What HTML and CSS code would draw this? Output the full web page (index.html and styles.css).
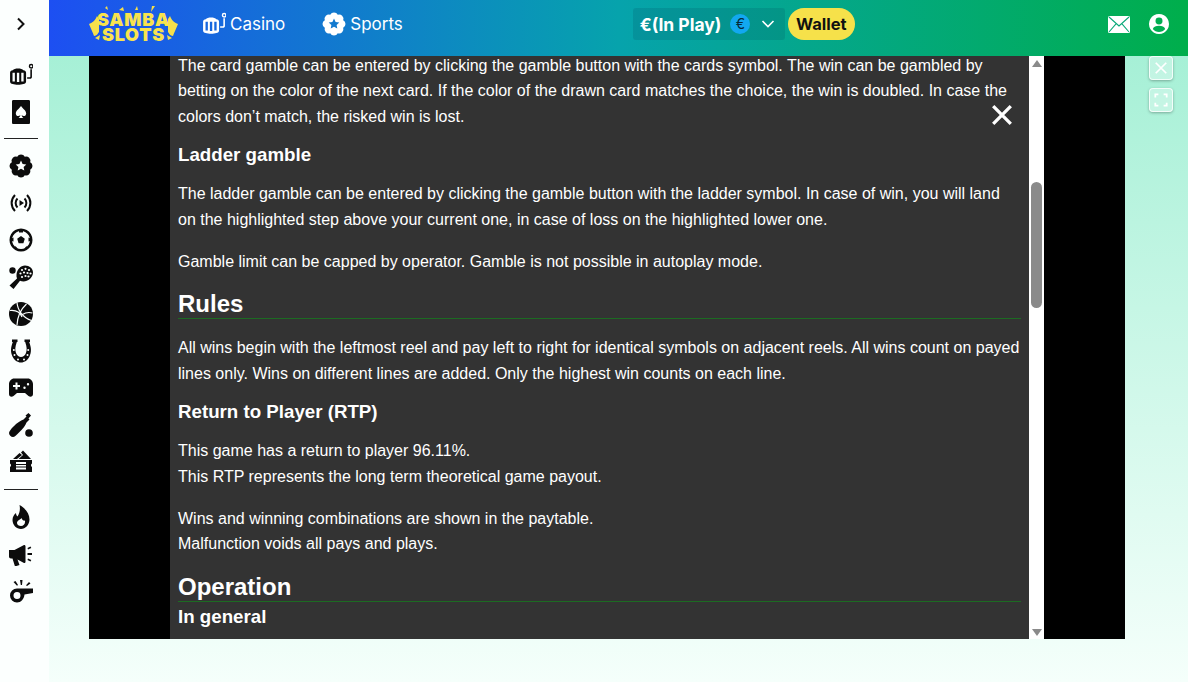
FILE: index.html
```html
<!DOCTYPE html>
<html lang="en">

<head>
  <meta charset="UTF-8">
  <meta name="viewport" content="width=device-width, initial-scale=1.0">
  <title>Samba Slots</title>
  <link rel="stylesheet" href="styles.css">
</head>

<body>
  <svg class="icon-defs" width="0" height="0">
    <symbol id="i-slot" viewBox="0 1.500 22.500 21">
      <path fill-rule="evenodd" d="M3.500 7.500C5 5.500 12 5.500 13.500 7.500C15 7.700 16 8.500 16 10V18C16 19.500 15 20 13.500 20.500C11 21.500 6 21.500 3.500 20.500C2 20 1 19.500 1 18V10C1 8.500 2 7.700 3.500 7.500ZM3.300 10V18H5.500V10ZM7.400 10V18.500H9.600V10ZM11.500 10V18H13.700V10Z"/>
      <path d="M17 15.500H19.800C20.800 15.500 21.500 14.800 21.500 13.800V6.500H20V13.500C20 13.900 19.900 14 19.500 14H17Z"/>
      <path fill-rule="evenodd" d="M20.800 1.500A2.300 2.300 0 1 1 20.790 6.100A2.300 2.300 0 1 1 20.800 1.500ZM20.800 2.800A1 1 0 1 0 20.810 4.800A1 1 0 1 0 20.800 2.800Z"/>
    </symbol>
    <symbol id="i-star" viewBox="0 0 24 24">
      <path fill-rule="evenodd" d="M21.200 8.200A4.300 4.300 0 0 1 21.200 15.800A4.300 4.300 0 0 1 15.800 21.200A4.300 4.300 0 0 1 8.200 21.200A4.300 4.300 0 0 1 2.800 15.800A4.300 4.300 0 0 1 2.800 8.200A4.300 4.300 0 0 1 8.200 2.800A4.300 4.300 0 0 1 15.800 2.800A4.300 4.300 0 0 1 21.200 8.200ZM12 6.500L10.400 10L6.700 10.400L9.400 13L8.700 16.600L12 14.800L15.300 16.600L14.600 13L17.300 10.400L13.600 10Z"/>
    </symbol>
  </svg>

  <aside class="sidebar">
    <div class="side-toggle">
      <svg class="chevron" viewBox="0 0 10 14"><path d="M2 1.500L7.500 7L2 12.500"/></svg>
    </div>
    <nav class="side-group">
      <span class="side-icon"><svg viewBox="0 0 24 24"><use href="#i-slot"/></svg></span>
      <span class="side-icon">
        <svg viewBox="0 0 24 24"><path fill-rule="evenodd" d="M4.500 0H19.500C20.500 0 21 .5 21 1.500V22.500C21 23.500 20.500 24 19.500 24H4.500C3.500 24 3 23.500 3 22.500V1.500C3 .5 3.500 0 4.500 0ZM12 6C10 9 6.800 10.500 6.800 13.500C6.800 16.200 10 17 11.300 15C11.200 16.300 10.500 17.300 9.500 18H14.500C13.500 17.300 12.800 16.300 12.700 15C14 17 17.200 16.200 17.200 13.500C17.200 10.500 14 9 12 6Z"/></svg>
      </span>
    </nav>
    <hr class="side-line">
    <nav class="side-group">
      <span class="side-icon"><svg viewBox="0 0 24 24"><use href="#i-star"/></svg></span>
      <span class="side-icon">
        <svg viewBox="0 0 24 24" class="live"><path d="M6 4C1.500 8.500 1.500 15.500 6 20M18 4C22.500 8.500 22.500 15.500 18 20M8.500 7.500C6 10 6 14 8.500 16.500M15.500 7.500C18 10 18 14 15.500 16.500"/><path class="solid" d="M10.500 9L15 12L10.500 15Z"/></svg>
      </span>
      <span class="side-icon">
        <svg viewBox="0 0 24 24"><path fill-rule="evenodd" d="M12 .5A11.500 11.500 0 1 1 11.990 .5ZM12 3A9 9 0 1 0 12.010 3ZM12 8L15.800 10.700L14.400 15.200H9.600L8.200 10.700Z"/><path d="M10 2.500H14V4.500H10ZM2.500 10.500L4.500 9.500V13.500L2.500 13ZM21.500 10.500L19.500 9.500V13.500L21.500 13ZM6 18L8 19.500L6.500 20.500ZM18 18L16 19.500L17.500 20.500Z"/></svg>
      </span>
      <span class="side-icon">
        <svg viewBox="0 0 24 24"><path fill-rule="evenodd" d="M16 .5C20.500 .5 24 3.500 24 7.500C24 12.500 19 16.500 14.500 16.500C13.200 16.500 12 16.200 11 15.700L4.500 24L.5 20.500L8 13.500C7.500 12.200 7.300 11 7.500 9.500C8 4.500 11.500 .5 16 .5Z"/><circle cx="3.500" cy="5.500" r="3.200"/><g class="knock"><circle cx="13" cy="5" r="1.100"/><circle cx="16.500" cy="3.800" r="1.100"/><circle cx="20" cy="5" r="1.100"/><circle cx="11.500" cy="8.500" r="1.100"/><circle cx="15" cy="7.500" r="1.100"/><circle cx="18.500" cy="8" r="1.100"/><circle cx="21.500" cy="8.500" r="1.100"/><circle cx="13" cy="12" r="1.100"/><circle cx="16.500" cy="11" r="1.100"/><circle cx="19.500" cy="11.500" r="1.100"/></g></svg>
      </span>
      <span class="side-icon">
        <svg viewBox="0 0 24 24"><circle cx="12" cy="12" r="12"/><path class="knock-line" d="M8 .5C8.500 8 14 16 22.500 18.500M17.500 2C12 7 8.500 14.500 8 23M1 8.500C6 8 11 10 13 15M23.500 11C20 10 16.500 10.500 13.500 12.500"/></svg>
      </span>
      <span class="side-icon">
        <svg viewBox="0 0 24 24"><path fill-rule="evenodd" d="M3 .5H8.500V3H7.800C6 8 6 11 7 14C8 16.500 10 18 12 18C14 18 16 16.500 17 14C18 11 18 8 16.200 3H15.500V.5H21V3H20.200C22.500 9 22.500 13 20.500 17.500C18.800 21.300 15.500 23.500 12 23.500C8.500 23.500 5.200 21.300 3.500 17.500C1.500 13 1.500 9 3.800 3H3Z"/><g class="knock"><circle cx="4.800" cy="11" r="1"/><circle cx="5.500" cy="16" r="1"/><circle cx="9" cy="20.500" r="1"/><circle cx="15" cy="20.500" r="1"/><circle cx="18.500" cy="16" r="1"/><circle cx="19.200" cy="11" r="1"/></g></svg>
      </span>
      <span class="side-icon">
        <svg viewBox="0 0 24 24"><path fill-rule="evenodd" d="M5 2.500H19C21.500 2.500 24 5 24 8V18C24 20.500 21.500 21.500 19.500 20L16 17H8L4.500 20C2.500 21.500 0 20.500 0 18V8C0 5 2.500 2.500 5 2.500ZM6.500 6.500V9H4V11H6.500V13.500H8.500V11H11V9H8.500V6.500ZM15.500 10.500A1.200 1.200 0 1 0 15.510 12.900A1.200 1.200 0 1 0 15.500 10.500ZM19 7A1.200 1.200 0 1 0 19.010 9.400A1.200 1.200 0 1 0 19 7Z"/></svg>
      </span>
      <span class="side-icon">
        <svg viewBox="0 0 24 24"><path d="M19.500 0L22 2.500L19.500 5.500L20.500 6.500L17.500 9.500C16.500 12.500 14 15.500 10 19.500C7.500 22 5.500 24 4 24C2 24 0 22 0 20C0 18.500 2 16 4.500 13.500C8.500 9.500 11.500 7.500 14.500 6.500L17.500 3.500L16.500 2.500Z"/><circle cx="20" cy="20" r="3.800"/></svg>
      </span>
      <span class="side-icon">
        <svg viewBox="0 0 24 24"><path fill-rule="evenodd" d="M1 10H23V13.500A2 2 0 0 0 23 17V22H1V17A2 2 0 0 0 1 13.500ZM7 12V14H17V12ZM7 15V16.500H17V15ZM7 17.500V19.500H17V17.500Z"/><path d="M4 9L10.500 3L13 5L8 9ZM9.500 9L14 5L12 2.500L14 .5L22 9Z"/></svg>
      </span>
    </nav>
    <hr class="side-line">
    <nav class="side-group">
      <span class="side-icon">
        <svg viewBox="0 0 24 24"><path fill-rule="evenodd" d="M10.500 0C16.500 3.500 20.500 8.500 20.500 14.500C20.500 19.500 16.500 24 12 24C7.500 24 3.500 20 3.500 15C3.500 12 5 9.500 7 8C7 9.500 7.500 10.700 8.500 11.500C10.500 8.500 11.500 4.500 10.500 0ZM12.500 13C11 15 8 15.500 8 18C8 19.800 10 21 12 21C14.500 21 16.500 19 16 15.500C14.800 16 13 15 12.500 13Z"/></svg>
      </span>
      <span class="side-icon">
        <svg viewBox="0 0 24 24"><path d="M0 8H5.500L15 3C16 3 16.500 3.500 16.500 4.500V19.500C16.500 20.500 16 21 15 21L8.500 17.500L10.500 23L6 24.500L3.500 16.500H2C.8 16.500 0 15.700 0 14.500Z"/><path d="M18.500 6L21.500 4.500L22.300 6L19 7.500ZM18.500 11H23V13H18.500ZM19 16.500L22.300 18L21.500 19.500L18.500 18Z"/></svg>
      </span>
      <span class="side-icon">
        <svg viewBox="0 0 24 24"><path fill-rule="evenodd" d="M8 9.500H24V14L15.500 15.500C15 20 12 23.500 8 23.500A7 7 0 1 1 8 9.500ZM8 13A3.500 3.500 0 1 0 8.010 20A3.500 3.500 0 1 0 8 13Z"/><path d="M11 1H13.500L13 6H11.800ZM4.500 3L6.500 2L9 6L8 6.800ZM20 3L21.500 4.500L18 7L17 6.200Z"/></svg>
      </span>
    </nav>
  </aside>

  <div class="page">
    <header class="topbar">
      <a class="logo">
        <svg class="logo-bits" viewBox="0 0 89 39">
          <path d="M0 19C3 18 6 16 8 11L10 14L10 27C9 28 8 31 5 31C4 28 2 24 0 19ZM89 19C86 18 83 16 81 11L79 14L79 27C80 28 81 31 84 31C85 28 87 24 89 19ZM6 33L11 30L10 35ZM83 33L78 30L79 35ZM16 3L18 1L19 5ZM30 5L34 2L35 6ZM46 5L48 1L49 5ZM62 7L63 1L66 1Z"/>
        </svg>
        <span class="logo-text">SAMBA<br>SLOTS</span>
      </a>
      <a class="top-link">
        <svg class="top-icon" viewBox="0 0 24 24"><use href="#i-slot"/></svg>
        Casino
      </a>
      <a class="top-link">
        <svg class="top-icon" viewBox="0 0 24 24"><use href="#i-star"/></svg>
        Sports
      </a>
      <div class="balance">
        <div class="balance-box">
          <span class="balance-text">€(In Play)</span>
          <span class="coin">€</span>
          <svg class="balance-caret" viewBox="0 0 14 8"><path d="M1.500 1L7 6.500L12.500 1"/></svg>
        </div>
        <button class="wallet">Wallet</button>
      </div>
      <div class="top-right">
        <svg class="mail" viewBox="0 0 22 17">
          <rect width="22" height="17" rx="1.500"/>
          <path d="M1 1L11 10L21 1M1 16L8.200 7.700M21 16L13.800 7.700"/>
        </svg>
        <svg class="user" viewBox="0 0 20 20"><path fill-rule="evenodd" d="M10 0A10 10 0 1 1 9.990 0ZM10 3.500A3.500 3.500 0 1 0 10.010 10.500A3.500 3.500 0 1 0 10 3.500ZM10 11.800C7 11.800 4.500 13 3.800 15C5.300 16.800 7.500 18 10 18C12.500 18 14.700 16.800 16.200 15C15.500 13 13 11.800 10 11.800Z"/></svg>
      </div>
    </header>

    <main class="stage">
      <div class="game">
        <div class="help-panel">
          <div class="help-text">
            <p>The card gamble can be entered by clicking the gamble button with the cards symbol. The win can be gambled by betting on the color of the next card. If the color of the drawn card matches the choice, the win is doubled. In case the colors don’t match, the risked win is lost.</p>
            <h3>Ladder gamble</h3>
            <p>The ladder gamble can be entered by clicking the gamble button with the ladder symbol. In case of win, you will land on the highlighted step above your current one, in case of loss on the highlighted lower one.</p>
            <p>Gamble limit can be capped by operator. Gamble is not possible in autoplay mode.</p>
            <h2>Rules</h2>
            <p>All wins begin with the leftmost reel and pay left to right for identical symbols on adjacent reels. All wins count on payed lines only. Wins on different lines are added. Only the highest win counts on each line.</p>
            <h3>Return to Player (RTP)</h3>
            <p>This game has a return to player 96.11%.<br>This RTP represents the long term theoretical game payout.</p>
            <p>Wins and winning combinations are shown in the paytable.<br>Malfunction voids all pays and plays.</p>
            <h2>Operation</h2>
            <h3>In general</h3>
          </div>
          <svg class="help-close" viewBox="0 0 20 20"><path d="M2 2L18 18M18 2L2 18"/></svg>
        </div>
        <div class="scrollbar">
          <span class="arrow-up"></span>
          <span class="thumb"></span>
          <span class="arrow-down"></span>
        </div>
      </div>
      <div class="game-tools">
        <button class="tool-btn"><svg viewBox="0 0 16 16"><path d="M2 2L14 14M14 2L2 14"/></svg></button>
        <button class="tool-btn"><svg viewBox="0 0 16 16"><path d="M1.500 5V1.500H5M11 1.500H14.500V5M14.500 11V14.500H11M5 14.500H1.500V11"/></svg></button>
      </div>
    </main>
  </div>
</body>

</html>
```

FILE: styles.css
```css
* {
  box-sizing: border-box;
}

html,
body {
  height: 100%;
}

body {
  margin: 0;
  display: flex;
  overflow: hidden;
  font-family: "Liberation Sans", Arial, sans-serif;
  background: linear-gradient(180deg, #a6f0d6 8%, #f5fffb 100%);
}

.icon-defs {
  position: absolute;
}

/* left rail */
.sidebar {
  width: 49px;
  flex-shrink: 0;
  background-color: #fcfffe;
  color: #0c0c0c;
}

.side-toggle {
  height: 48px;
  display: flex;
  align-items: center;
  padding-left: 16px;
  margin-bottom: 8px;
}

.chevron {
  width: 10px;
  height: 14px;
  fill: none;
  stroke: #111;
  stroke-width: 2;
}

.side-group {
  display: flex;
  flex-direction: column;
}

.side-icon {
  height: 37px;
  display: flex;
  align-items: center;
  padding-left: 9px;
}

.side-icon svg {
  width: 24px;
  height: 24px;
  fill: currentColor;
}

.side-icon .live {
  fill: none;
  stroke: currentColor;
  stroke-width: 2;
}

.side-icon .live .solid {
  fill: currentColor;
  stroke: none;
}

.knock {
  fill: #fcfffe;
}

.knock-line {
  fill: none;
  stroke: #fcfffe;
  stroke-width: 1.2;
}

.side-line {
  margin: 8px 11px 8px 4px;
  border: 0;
  border-top: 1px solid #222;
}

.side-line:last-of-type {
  margin-top: 9px;
}

/* header */
.page {
  flex: 1;
  display: flex;
  flex-direction: column;
  min-width: 0;
}

.topbar {
  height: 56px;
  flex-shrink: 0;
  display: flex;
  align-items: center;
  padding: 0 0 8px 40px;
  color: #fff;
  font-family: Inter, "Liberation Sans", sans-serif;
  background: linear-gradient(90deg, #1d4ff2 0%, #06a3ac 50%, #00ae4b 100%);
  position: relative;
  z-index: 2;
}

.logo {
  width: 89px;
  height: 39px;
  margin-right: 24px;
  padding-top: 7px;
  position: relative;
  text-align: center;
}

.logo-bits {
  position: absolute;
  left: 0;
  top: 0;
  width: 89px;
  height: 39px;
  fill: #f6e04c;
}

.logo-text {
  display: block;
  position: relative;
  font-size: 18px;
  line-height: 15px;
  font-weight: 900;
  letter-spacing: .7px;
  color: #f8e34e;
}

.top-link {
  display: flex;
  align-items: center;
  gap: 4px;
  margin-right: 37px;
  font-size: 17px;
  color: #fff;
}

.top-icon {
  width: 24px;
  height: 24px;
  fill: #fff;
}

.balance {
  display: flex;
  align-items: center;
  gap: 3px;
  margin-left: 193px;
}

.balance-box {
  height: 32px;
  width: 152px;
  display: flex;
  align-items: center;
  padding-left: 7px;
  border-radius: 3px;
  background-color: rgba(0, 60, 90, .16);
}

.balance-text {
  font-size: 17.5px;
  font-weight: 700;
  white-space: nowrap;
}

.coin {
  width: 20px;
  height: 20px;
  margin-left: 9px;
  border-radius: 50%;
  background-color: #12a8f0;
  color: #062a3a;
  font-size: 14px;
  line-height: 20px;
  text-align: center;
}

.balance-caret {
  width: 14px;
  height: 8px;
  margin-left: 11px;
  fill: none;
  stroke: #fff;
  stroke-width: 1.600;
}

.wallet {
  height: 32px;
  width: 67px;
  padding: 0;
  border: none;
  border-radius: 16px;
  background-color: #f6e14a;
  color: #111;
  font-family: inherit;
  font-size: 16.5px;
  font-weight: 700;
}

.top-right {
  margin-left: auto;
  margin-right: 19px;
  display: flex;
  align-items: center;
  gap: 19px;
}

.mail {
  width: 22px;
  height: 17px;
  fill: #fff;
}

.mail path {
  fill: none;
  stroke: #08a878;
  stroke-width: 1.1;
}

.user {
  width: 20px;
  height: 20px;
  fill: #fff;
}

/* game area */
.stage {
  display: flex;
  align-items: flex-start;
  padding-left: 40px;
}

.game {
  width: 1036px;
  height: 583px;
  flex-shrink: 0;
  display: flex;
  justify-content: center;
  background-color: #000;
}

.help-panel {
  width: 859px;
  padding: 0 8px;
  position: relative;
  overflow: hidden;
  background-color: #333;
  color: #fff;
}

.help-text {
  margin-top: -3.4px;
  font-size: 16px;
  line-height: 25.6px;
}

.help-text p {
  margin: 0 0 16px;
}

.help-text h2 {
  margin: 0 0 5px;
  font-size: 24px;
  line-height: 28px;
  border-bottom: 1px solid #1c6b22;
}

.help-text h2 + p {
  margin-top: 16px;
}

.help-text h3 {
  margin: 0 0 16px;
  font-size: 18.72px;
  line-height: 20px;
}

.help-close {
  position: absolute;
  left: 821px;
  top: 48px;
  width: 22px;
  height: 22px;
  fill: none;
  stroke: #fff;
  stroke-width: 3;
}

.scrollbar {
  width: 15px;
  position: relative;
  background-color: #fff;
}

.thumb {
  position: absolute;
  left: 2px;
  top: 126px;
  width: 11px;
  height: 126px;
  border-radius: 6px;
  background-color: #8a8a8a;
}

.arrow-up,
.arrow-down {
  position: absolute;
  left: 3px;
  width: 0;
  height: 0;
  border-left: 5px solid transparent;
  border-right: 5px solid transparent;
}

.arrow-up {
  top: 4px;
  border-bottom: 7px solid #8a8a8a;
}

.arrow-down {
  bottom: 3px;
  border-top: 7px solid #8a8a8a;
}

.game-tools {
  display: flex;
  flex-direction: column;
  gap: 8px;
  margin-left: 24px;
}

.tool-btn {
  width: 24px;
  height: 24px;
  padding: 4px;
  border: 1px solid rgba(255, 255, 255, .8);
  border-radius: 4px;
  background-color: rgba(255, 255, 255, .3);
  box-shadow: 0 1px 3px rgba(0, 0, 0, .3);
}

.tool-btn svg {
  display: block;
  width: 14px;
  height: 14px;
  fill: none;
  stroke: #fff;
  stroke-width: 2;
}
```
